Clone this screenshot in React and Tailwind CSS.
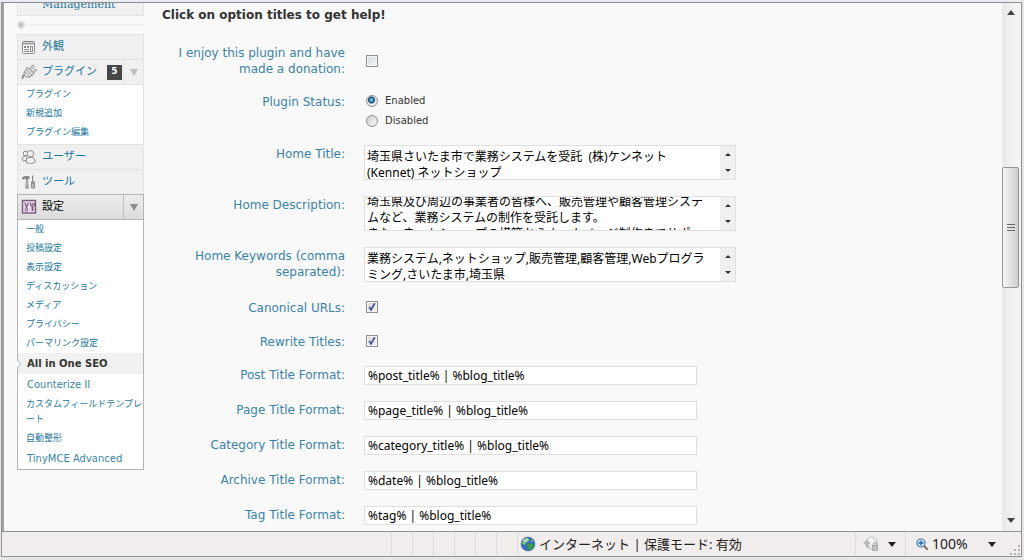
import { useEffect, useRef } from "react";

const fieldFont = "font-['Noto_Sans','Noto_Sans_CJK_JP',sans-serif]";

const settingsLinks = [
  "一般",
  "投稿設定",
  "表示設定",
  "ディスカッション",
  "メディア",
  "プライバシー",
  "パーマリンク設定",
  "All in One SEO",
  "Counterize II",
  "カスタムフィールドテンプレート",
  "自動整形",
  "TinyMCE Advanced",
];

const titleFormats = [
  { id: "post", label: "Post Title Format:", value: "%post_title% | %blog_title%" },
  { id: "page", label: "Page Title Format:", value: "%page_title% | %blog_title%" },
  { id: "category", label: "Category Title Format:", value: "%category_title% | %blog_title%" },
  { id: "archive", label: "Archive Title Format:", value: "%date% | %blog_title%" },
  { id: "tag", label: "Tag Title Format:", value: "%tag% | %blog_title%" },
];

function Arrow({ up = false, className }) {
  return (
    <svg viewBox="0 0 10 6" preserveAspectRatio="none" className={className} fill="currentColor" aria-hidden="true">
      <path d={up ? "M0 6 5 0l5 6z" : "M0 0h10L5 6z"} />
    </svg>
  );
}

function AppearanceIcon() {
  return (
    <svg viewBox="0 0 16 16" className="size-4 shrink-0" fill="none" stroke="#8a8a8a">
      <rect x="1.5" y="2.5" width="12" height="12" rx="1" fill="#fafafa" />
      <path d="M2 4.5h11" strokeWidth="2" stroke="#a0a0a0" />
      <path d="M3 8h2M6 8h2" strokeWidth="2" />
      <path d="M3 10.5h5M3 12.5h5" />
      <rect x="9.5" y="7.5" width="2" height="5" fill="#fff" />
    </svg>
  );
}

function PluginIcon() {
  return (
    <svg viewBox="0 0 16 16" className="size-4 shrink-0" fill="none" stroke="#858585" strokeLinecap="round" strokeLinejoin="round">
      <path d="M1.5 14.500c0-2 .5-3 2-3.500" strokeWidth="1.600" />
      <path d="M6.500 3.500l6.500 6-1 1.200c-1.500.3-2 2.800-5.500 2.500-2 0-3.500-1.500-3.500-3.500 0-2.700 2.500-3.500 2.500-5z" fill="#e4e4e4" />
      <path d="M8.500 5l3-3.500c1-.8 2 .2 1.300 1.200l-2.500 3M11.500 8l2.500-2.500c1-.8 2 .3 1.200 1.200l-2.700 2.500" fill="#f4f4f4" />
      <path d="M5.500 6l5.500 5M4.500 8.500l3.500 3" strokeWidth=".8" />
    </svg>
  );
}

function UsersIcon() {
  return (
    <svg viewBox="0 0 16 16" className="size-4 shrink-0" fill="#f0f0f0" stroke="#8a8a8a">
      <circle cx="4.500" cy="4.500" r="2.300" />
      <path d="M4.500 7C2.200 7 1.200 8.500 1.200 11c1.500 1 4 1 5.500 0z" />
      <circle cx="9.500" cy="4.800" r="3.200" />
      <path d="M9.500 8.300c-3 0-4.500 1.700-4.500 4.700 2.500 2 6.500 2 9.200 0 0-3-1.700-4.700-4.700-4.700z" />
    </svg>
  );
}

function ToolsIcon() {
  return (
    <svg viewBox="0 0 16 16" className="size-4 shrink-0" fill="#8a8a8a">
      <path d="M1 3.500C2.500 2 5.500 1.800 8.500 2v3H7l.7 9.500H4.300L5 5H3.200L1.500 6z" />
      <path d="M5.700 6h.7v7.500h-.9z" fill="#ddd" />
      <path d="M11 1.500h1.200V7.500H14v6.200l-.8.800h-2.400l-.8-.8V7.500h1z" />
      <path d="M11.500 9.500h1v4h-1z" fill="#e5e5e5" />
    </svg>
  );
}

function SettingsIcon() {
  return (
    <svg viewBox="0 0 16 16" className="size-4 shrink-0" fill="none" stroke="#7c5a80">
      <rect x="1.500" y="1.500" width="13" height="12.500" fill="#eadcec" strokeWidth="1.400" />
      <path d="M4 3.500v2M7 3.500v2M4 6h3M9.500 3.500v2.500l1.500 1.500h1L13.500 6V3.500M11.500 4v2" strokeWidth="1.200" />
      <path d="M5.500 6v3.500M11.500 7v5" strokeWidth="1.800" />
      <circle cx="5.500" cy="10.800" r="1.300" />
    </svg>
  );
}

function GlobeIcon() {
  return (
    <svg viewBox="0 0 16 16" className="size-4 shrink-0">
      <circle cx="8" cy="8" r="7" fill="#2f6fc0" stroke="#4b6f9c" strokeWidth=".6" />
      <path d="M3 4c2-2.500 5-2.500 6-1.500L8 5 6 6 5 9 2 8z" fill="#7cc36a" />
      <path d="M7 8l4-1 3 2c-.5 3-2.500 5-5 5.500L7 11z" fill="#3d9a43" />
      <path d="M10.500 3l3 2-1.500 1z" fill="#8ccf80" />
      <ellipse cx="6" cy="4.500" rx="3" ry="2" fill="#fff" opacity=".35" />
    </svg>
  );
}

function ProtectIcon() {
  return (
    <svg viewBox="0 0 18 16" className="h-4 w-[18px] shrink-0">
      <circle cx="9.500" cy="7" r="6" fill="#ececec" stroke="#c4c4c4" />
      <path d="M1 8l4-4.500L8.500 8l-2 .3c0 2 .7 2.700 1.500 3.700-3 0-4.500-1.500-4.500-4z" fill="#b5b5b5" />
      <path d="M9.500 2v5h4" fill="none" stroke="#fff" strokeWidth="1.500" />
      <rect x="10.500" y="9.500" width="5" height="5" fill="#c2c2c2" stroke="#9b9b9b" strokeWidth=".7" />
      <path d="M11.500 9.500V8a1.500 1.500 0 013 0v1.500" fill="none" stroke="#9b9b9b" />
    </svg>
  );
}

function ZoomIcon() {
  return (
    <svg viewBox="0 0 12 12" className="size-3 shrink-0" fill="none">
      <path d="M7.500 7.500l3.500 3.500" stroke="#8a6a4a" strokeWidth="2" strokeLinecap="round" />
      <circle cx="5" cy="5" r="4" fill="#dcebfa" stroke="#3e7fc4" strokeWidth="1.200" />
      <path d="M5 2.500v5M2.500 5h5" stroke="#1f66b8" strokeWidth="1.400" />
    </svg>
  );
}

function MenuItem({ icon, children, extra }) {
  return (
    <div className="flex h-[25px] items-center border-t border-[#e3e3e3] bg-[#f0f0f0] pl-[3px]">
      {icon}
      <a href="#" className="ml-[5px] text-[11px] text-[#21759b]">
        {children}
      </a>
      {extra}
    </div>
  );
}

function SubLink({ label }) {
  const current = label === "All in One SEO";
  return (
    <li className={current ? "relative bg-[#f1f1f1]" : ""}>
      {current && (
        <svg viewBox="0 0 5 10" className="absolute top-1.5 -left-px h-2.5 w-[5px]" fill="#f9f9f9" stroke="#bbb">
          <path d="M0 1l4 4-4 4" />
        </svg>
      )}
      <a
        href="#"
        className={
          current
            ? "block py-0.5 pl-[9px] text-[10px] leading-[17px] font-bold text-[#333]"
            : /^[A-Z]/.test(label)
              ? "block py-0.5 pl-[9px] text-[10px] leading-[17px] text-[#3b85a6]"
              : "block py-0.5 pl-2 text-[9px] leading-[15px] text-[#21759b] [line-break:loose]"
        }
      >
        {label}
      </a>
    </li>
  );
}

function Row({ id, label, children, center = false }) {
  return (
    <div className={center ? "flex min-h-[18px] items-center gap-[19px]" : "flex min-h-[18px] items-start gap-[19px]"}>
      <label htmlFor={id} className="w-[183px] shrink-0 pt-px text-right text-xs leading-4 text-[#3a83a8]">
        {label}
      </label>
      {children}
    </div>
  );
}

function Check({ id, defaultChecked = false }) {
  return (
    <span className="relative ml-0.5 flex size-3">
      <input
        id={id}
        type="checkbox"
        defaultChecked={defaultChecked}
        className="peer size-3 appearance-none border border-[#8e8f8f] bg-linear-to-br from-[#d5d8dc] to-[#f6f6f6] shadow-[inset_0_0_0_1px_#f4f4f4]"
      />
      <svg
        viewBox="0 0 13 13"
        className="pointer-events-none absolute inset-0 hidden peer-checked:block"
        fill="none"
        stroke="#4a5a96"
        strokeWidth="2"
      >
        <path d="M3.500 6.500l2 3 4-7" />
      </svg>
    </span>
  );
}

function StatusRadio({ id, label, defaultChecked = false }) {
  return (
    <span className="flex h-4 items-center gap-[7px]">
      <input
        id={id}
        type="radio"
        name="status"
        defaultChecked={defaultChecked}
        className="size-3 appearance-none rounded-full border border-[#8e8f8f] bg-linear-to-br from-[#cfcfcf] to-[#f8f8f8] checked:bg-[radial-gradient(circle_at_45%_40%,#5cc4ea_0_1px,#14405e_3px,#e4eaee_4px)]"
      />
      <label htmlFor={id} className="text-[10px] leading-4 text-[#333]">
        {label}
      </label>
    </span>
  );
}

function TextBox({ id, value, scroll = 0 }) {
  const ref = useRef(null);

  useEffect(() => {
    ref.current.scrollTop = scroll;
  }, [scroll]);

  return (
    <div className="flex h-[35px] w-[372px] border border-[#dfdfdf] bg-white">
      <textarea
        id={id}
        ref={ref}
        defaultValue={value}
        className={`${fieldFont} min-w-0 flex-1 resize-none overflow-hidden pt-[3px] pr-2 pl-0.5 text-xs leading-4 text-black outline-none`}
      />
      <div className="flex w-[15px] flex-col items-center justify-between bg-[#f0f0f0] py-[7px] text-[#333]">
        <Arrow up className="h-[3px] w-1.5" />
        <Arrow className="h-[3px] w-1.5" />
      </div>
    </div>
  );
}

function Sidebar() {
  return (
    <nav className="w-[127px] shrink-0">
      <div className="flex h-[13px] items-end overflow-hidden border border-t-0 border-[#e3e3e3] bg-[#f1f1f1] pl-6">
        <a href="#" className="pb-1 font-['DejaVu_Serif',serif] text-[11px] leading-3 text-[#21759b]">
          Management
        </a>
      </div>
      <div className="flex h-[18px] items-center gap-0.5">
        <span className="size-2 rounded-full border-2 border-[#e0e0e0] bg-[#bbb]" />
        <span className="h-0.5 flex-1 bg-[#f0f0f0]" />
      </div>

      <div className="border-x border-[#e3e3e3]">
        <MenuItem icon={<AppearanceIcon />}>外観</MenuItem>
        <MenuItem
          icon={<PluginIcon />}
          extra={
            <>
              <span className="ml-auto flex h-[15px] w-[15px] items-center justify-center bg-[#464646] text-[9px] font-bold text-white">
                5
              </span>
              <span className="ml-px flex h-full w-5 items-center justify-center border-l border-[#e6e6e6] text-[#bdbdbd]">
                <Arrow className="h-[7px] w-2" />
              </span>
            </>
          }
        >
          プラグイン
        </MenuItem>
        <ul className="border-t border-[#e3e3e3] bg-white pb-0.5">
          <SubLink label="プラグイン" />
          <SubLink label="新規追加" />
          <SubLink label="プラグイン編集" />
        </ul>
        <MenuItem icon={<UsersIcon />}>ユーザー</MenuItem>
        <MenuItem icon={<ToolsIcon />}>ツール</MenuItem>
      </div>

      <div className="flex h-[26px] items-center border border-[#b4b4b4] bg-linear-to-b from-[#ececec] to-[#dcdcdc] pl-[3px]">
        <SettingsIcon />
        <a href="#" className="ml-[5px] text-[11px] text-black">
          設定
        </a>
        <button
          type="button"
          aria-label="設定"
          className="ml-auto flex h-full w-5 items-center justify-center border-l border-[#c0c0c0] text-[#8c8c8c]"
        >
          <Arrow className="h-[7px] w-2" />
        </button>
      </div>
      <ul className="border border-t-0 border-[#b4b4b4] bg-white">
        {settingsLinks.map((label) => (
          <SubLink key={label} label={label} />
        ))}
      </ul>
    </nav>
  );
}

function OptionsForm() {
  return (
    <main className="min-w-0 flex-1 pt-1">
      <h3 className="text-xs leading-[17px] font-bold text-[#333]">Click on option titles to get help!</h3>
      <form className="mt-5 flex flex-col gap-4">
        <Row id="donated" label="I enjoy this plugin and have made a donation:" center>
          <Check id="donated" />
        </Row>
        <Row id="enabled" label="Plugin Status:">
          <div className="ml-0.5 flex flex-col gap-1">
            <StatusRadio id="enabled" label="Enabled" defaultChecked />
            <StatusRadio id="disabled" label="Disabled" />
          </div>
        </Row>
        <Row id="home-title" label="Home Title:">
          <TextBox id="home-title" value="埼玉県さいたま市で業務システムを受託  (株)ケンネット (Kennet) ネットショップ" />
        </Row>
        <Row id="home-description" label="Home Description:">
          <TextBox
            id="home-description"
            scroll={6}
            value={
              "埼玉県及び周辺の事業者の皆様へ、販売管理や顧客管理システムなど、業務システムの制作を受託します。\nまた、ネットショップの構築からホームページ制作までサポート"
            }
          />
        </Row>
        <Row id="home-keywords" label="Home Keywords (comma separated):">
          <TextBox
            id="home-keywords"
            value="業務システム,ネットショップ,販売管理,顧客管理,Webプログラミング,さいたま市,埼玉県"
          />
        </Row>
        <Row id="canonical" label="Canonical URLs:" center>
          <Check id="canonical" defaultChecked />
        </Row>
        <Row id="rewrite" label="Rewrite Titles:" center>
          <Check id="rewrite" defaultChecked />
        </Row>
        {titleFormats.map(({ id, label, value }) => (
          <Row key={id} id={id} label={label}>
            <input
              id={id}
              type="text"
              defaultValue={value}
              className={`${fieldFont} h-[19px] w-[333px] border border-[#dfdfdf] bg-white px-[3px] text-xs text-black outline-none`}
            />
          </Row>
        ))}
      </form>
    </main>
  );
}

function Scrollbar() {
  return (
    <div className="flex w-[17px] shrink-0 flex-col items-center bg-linear-to-r from-[#e9e9e9] to-[#f6f6f6] text-[#444]">
      <button type="button" aria-label="Scroll up" className="flex h-[18px] w-full shrink-0 items-center justify-center">
        <Arrow up className="h-[5px] w-2" />
      </button>
      <div className="flex-[147]" />
      <div className="flex w-full flex-[119] flex-col items-center justify-center gap-0.5 rounded-xs border border-[#979797] bg-linear-to-r from-[#f5f5f5] to-[#cfcfcf]">
        <span className="h-px w-2 bg-[#666]" />
        <span className="h-px w-2 bg-[#666]" />
        <span className="h-px w-2 bg-[#666]" />
      </div>
      <div className="flex-[222]" />
      <button type="button" aria-label="Scroll down" className="flex h-[22px] w-full shrink-0 items-center justify-center">
        <Arrow className="h-[5px] w-2" />
      </button>
    </div>
  );
}

function StatusBar() {
  return (
    <footer className="flex h-[26px] shrink-0 items-stretch border-y border-[#919191] bg-[#f0edec] font-['Noto_Sans','Noto_Sans_CJK_JP',sans-serif] text-sm text-[#222]">
      <div className="flex flex-1 justify-end">
        {[0, 1, 2, 3, 4, 5].map((n) => (
          <span key={n} className="w-[21px] border-l border-[#dedbda]" />
        ))}
      </div>
      <div className="flex w-[338px] items-center gap-[3px] border-l border-[#dedbda] pl-0.5">
        <GlobeIcon />
        <span className="text-[13px] whitespace-nowrap">インターネット | 保護モード: 有効</span>
      </div>
      <button type="button" aria-label="保護モード" className="flex w-[50px] items-center gap-2 border-l border-[#dedbda] pl-1.5">
        <ProtectIcon />
        <Arrow className="h-[5px] w-2" />
      </button>
      <button type="button" className="flex w-[105px] items-center border-l border-[#dedbda] pl-2.5">
        <ZoomIcon />
        <span className="ml-1">100%</span>
        <Arrow className="ml-5 h-[5px] w-2" />
      </button>
      <svg viewBox="0 0 11 11" className="size-[11px] self-end" fill="#b5b2b1">
        <path d="M8 0h2v2H8zM4 4h2v2H4zM8 4h2v2H8zM0 8h2v2H0zM4 8h2v2H4zM8 8h2v2H8z" />
      </svg>
    </footer>
  );
}

export default function App() {
  return (
    <div className="flex h-screen flex-col overflow-hidden bg-[#e6e6e6] pr-0.5 pb-[3px] pl-px font-['DejaVu_Sans','Noto_Sans_CJK_JP',sans-serif]">
      <div className="h-0.5 shrink-0 bg-[#e9eef5]" />
      <div className="flex min-h-0 flex-1 flex-col border-x border-[#919191]">
        <div className="flex min-h-0 flex-1 border-t border-l-2 border-t-[#8a8c90] border-l-[#a0a2a4] bg-[#f9f9f9]">
          <div className="flex min-w-0 flex-1 gap-[18px] overflow-hidden pl-[13px]">
            <Sidebar />
            <OptionsForm />
          </div>
          <Scrollbar />
          <div className="w-0.5 bg-[#f4f4f4]" />
        </div>
        <StatusBar />
      </div>
    </div>
  );
}
